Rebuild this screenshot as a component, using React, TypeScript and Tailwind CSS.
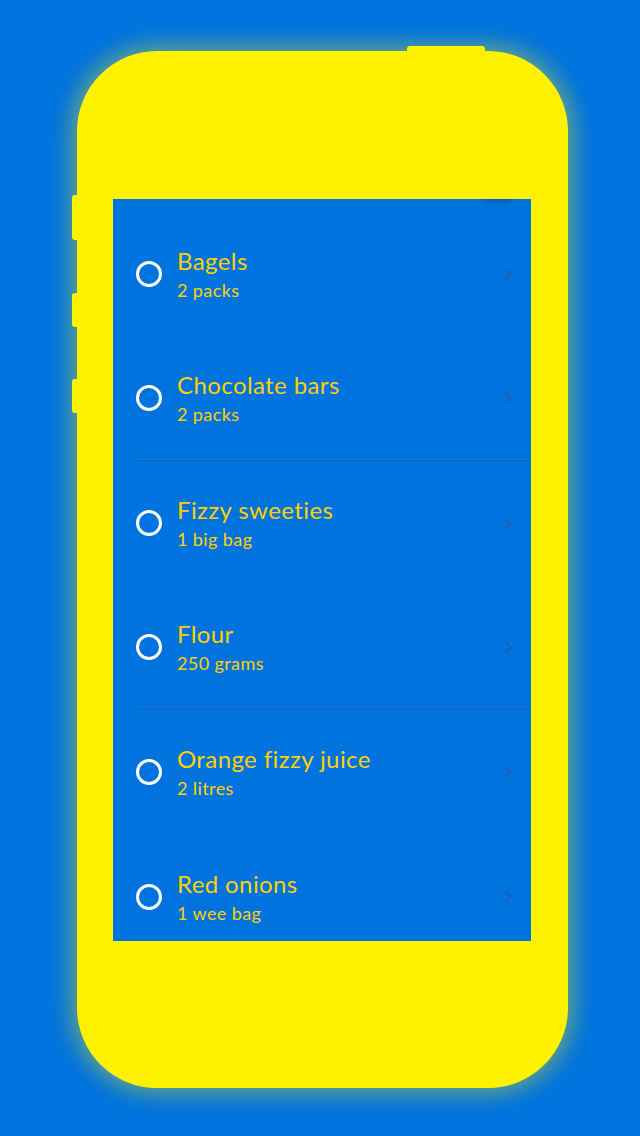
const items = [
  { name: 'Bagels', qty: '2 packs' },
  { name: 'Chocolate bars', qty: '2 packs', line: true },
  { name: 'Fizzy sweeties', qty: '1 big bag' },
  { name: 'Flour', qty: '250 grams', line: true },
  { name: 'Orange fizzy juice', qty: '2 litres' },
  { name: 'Red onions', qty: '1 wee bag' },
]

function Chevron() {
  return (
    <svg width="8" height="13" viewBox="0 0 8 13" fill="none">
      <path d="M1.5 1.5 L6.5 6.5 L1.5 11.5" stroke="#1f5fa6" strokeWidth="1.5" strokeLinecap="round" strokeLinejoin="round" />
    </svg>
  )
}

export default function App() {
  return (
    <div className="w-[640px] h-[1136px] bg-[#0073de] overflow-hidden font-['Lato',sans-serif]">
      <div className="relative ml-[77px] mt-[51px] w-[491px] h-[1037px]">
        {/* side buttons */}
        <div className="absolute -top-[5px] left-[330px] w-[78px] h-[8px] rounded-t-[3px] bg-[#fff200]" />
        <div className="absolute top-[144px] -left-[5px] w-[8px] h-[45px] rounded-l-[3px] bg-[#fff200]" />
        <div className="absolute top-[242px] -left-[5px] w-[8px] h-[34px] rounded-l-[3px] bg-[#fff200]" />
        <div className="absolute top-[328px] -left-[5px] w-[8px] h-[34px] rounded-l-[3px] bg-[#fff200]" />

        {/* body */}
        <div className="relative w-full h-full rounded-[80px] bg-[#fff200] shadow-[0_0_22px_6px_rgba(255,240,0,0.4)] pt-[148px] pl-[36px]">
          <div className="relative w-[418px] h-[742px] bg-[#0073de] overflow-hidden">
            <div className="absolute top-[-6px] left-[372px] w-[26px] h-[8px] rounded-full bg-[#0a3f80] blur-[3px] opacity-60" />
            <div className="pt-[13px]">
              {items.map((item) => (
                <div key={item.name} className="h-[124.5px] pl-[19px] flex">
                  <div className={`flex-1 flex items-center pr-[19px] ${item.line ? 'border-b border-[#1464b8]' : ''}`}>
                    <div className="w-[26px] h-[26px] ml-[4px] rounded-full border-[3px] border-white" />
                    <div className="ml-[15px] mt-[1px] flex-1 flex flex-col text-[#ffd000]">
                      <span className="text-[24px] leading-[24px] tracking-[0.4px]">{item.name}</span>
                      <span className="mt-[7px] text-[18px] leading-[20px] tracking-[0.4px]">{item.qty}</span>
                    </div>
                    <Chevron />
                  </div>
                </div>
              ))}
            </div>
          </div>
        </div>
      </div>
    </div>
  )
}
